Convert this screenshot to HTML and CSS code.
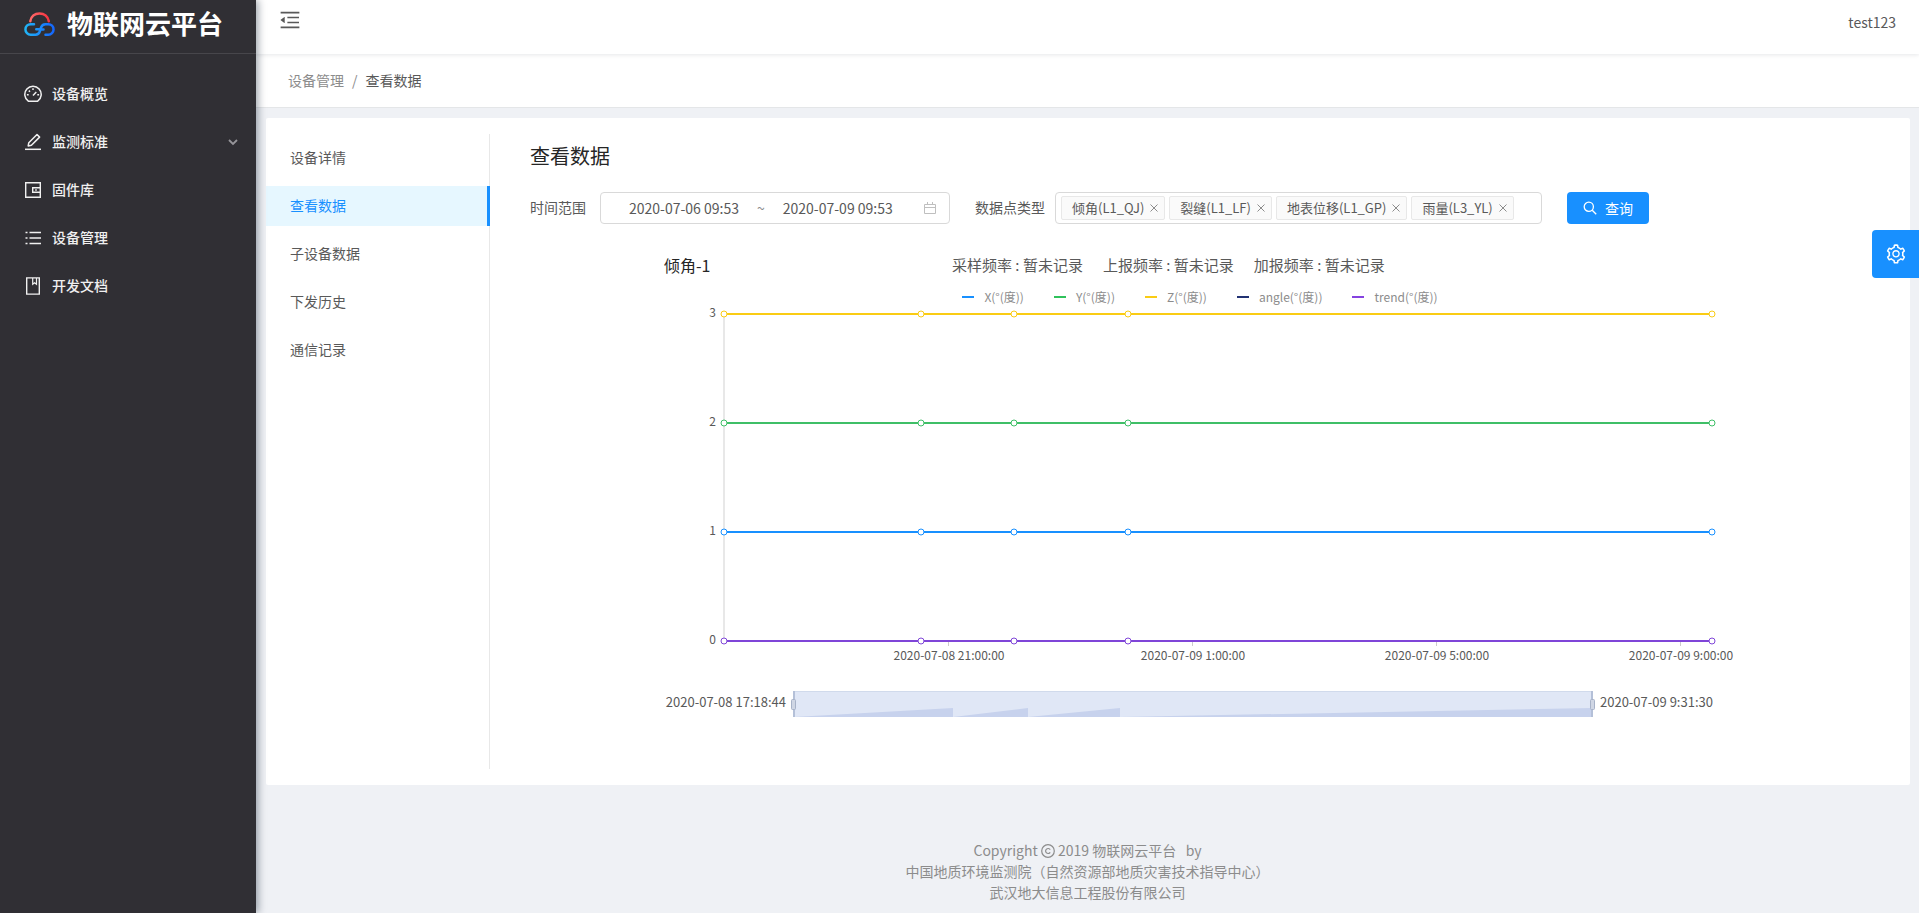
FILE: index.html
```html
<!DOCTYPE html>
<html lang="zh-CN">
<head>
<meta charset="utf-8">
<title>查看数据 - 物联网云平台</title>
<link rel="stylesheet" href="styles.css">
</head>
<body>
<div class="layout">
  <aside class="sider">
    <a class="brand" href="#">
      <svg class="brand-logo" viewBox="0 0 31 24" fill="none" stroke-width="2.500" stroke-linecap="round">
        <defs>
          <linearGradient id="cloud-red" x1="0" y1="0" x2="1" y2="0"><stop offset="0" stop-color="#ff6a6a"/><stop offset="1" stop-color="#f5333f"/></linearGradient>
          <linearGradient id="cloud-blue" gradientUnits="userSpaceOnUse" x1="0" y1="0" x2="31" y2="0"><stop offset="0" stop-color="#22b8f5"/><stop offset="1" stop-color="#1463ff"/></linearGradient>
        </defs>
        <path d="M6.300 9.300C7 4.500 10.800 1.400 15.500 1.400S24 4.500 24.800 9.300" stroke="url(#cloud-red)"/>
        <path d="M10 12.200H6.700a5.200 5.200 0 0 0 0 10.500H11.500c2.300 0 3.600-1.200 4.300-3.200l1.200-3.800c.7-2.200 2.200-3.500 4.500-3.500H24.300a5.200 5.200 0 0 1 0 10.500H21.500M12.300 17.200h3.200M18 17.400h1.500" stroke="url(#cloud-blue)"/>
      </svg>
      <span class="brand-name">物联网云平台</span>
    </a>
    <nav class="side-nav">
      <a class="side-link" href="#">
        <svg class="icon-18" viewBox="0 0 18 18" fill="none" stroke="currentColor" stroke-width="1.500"><path d="M4.300 16.200A8.200 8.200 0 1 1 13.700 16.200Z" stroke-linejoin="round"/><path d="M9 10.500l3.300-3.600M9 3.300v1.800M2.900 9.800h1.800M13.300 9.800h1.800M4.800 5.600l1.200 1.200"/></svg>
        <span>设备概览</span>
      </a>
      <a class="side-link" href="#">
        <svg class="icon-18" viewBox="0 0 18 18" fill="none" stroke="currentColor" stroke-width="1.500"><path d="M1 16.300h16"/><path d="M4.200 12.900l.6-3.200 8.200-8.200 2.600 2.600-8.200 8.200z" stroke-linejoin="round"/></svg>
        <span>监测标准</span>
        <svg class="icon-10 side-arrow" viewBox="0 0 10 10" fill="none" stroke="currentColor" stroke-width="1.800"><path d="M1 3l4 4 4-4"/></svg>
      </a>
      <a class="side-link" href="#">
        <svg class="icon-18" viewBox="0 0 18 18" fill="none" stroke="currentColor" stroke-width="1.400"><path d="M1.700 1.700h14.600v14.600H1.700zM16 6.700H8.700v4.600H16"/><path d="M11.200 8.200h1.600v1.600h-1.600z" fill="currentColor" stroke="none"/></svg>
        <span>固件库</span>
      </a>
      <a class="side-link" href="#">
        <svg class="icon-18" viewBox="0 0 18 18" fill="none" stroke="currentColor" stroke-width="1.500"><path d="M5.500 3.500H17M5.500 9H17M5.500 14.500H17M1.500 3.500h2M1.500 9h2M1.500 14.500h2"/></svg>
        <span>设备管理</span>
      </a>
      <a class="side-link" href="#">
        <svg class="icon-18" viewBox="0 0 18 18" fill="none" stroke="currentColor" stroke-width="1.400"><path d="M2.700.9h12.600v16.200H2.700z"/><path d="M8.700 1v6.300l1.900-1.500 1.900 1.500V1" stroke-width="1.200"/></svg>
        <span>开发文档</span>
      </a>
    </nav>
  </aside>

  <div class="page">
    <header class="topbar">
      <button class="fold" type="button" aria-label="收起菜单">
        <svg class="icon-24" viewBox="0 0 1024 1024" fill="currentColor"><path d="M408 442h480c4.400 0 8-3.600 8-8v-56c0-4.400-3.600-8-8-8H408c-4.400 0-8 3.600-8 8v56c0 4.400 3.600 8 8 8zm-8 204c0 4.400 3.600 8 8 8h480c4.400 0 8-3.600 8-8v-56c0-4.400-3.600-8-8-8H408c-4.400 0-8 3.600-8 8v56zm504-486H120c-4.400 0-8 3.600-8 8v56c0 4.400 3.600 8 8 8h784c4.400 0 8-3.600 8-8v-56c0-4.400-3.600-8-8-8zm0 632H120c-4.400 0-8 3.600-8 8v56c0 4.400 3.600 8 8 8h784c4.400 0 8-3.600 8-8v-56c0-4.400-3.600-8-8-8zM115.400 518.900L271.700 642c5.800 4.600 14.400.5 14.400-6.900V388.900c0-7.400-8.500-11.500-14.400-6.900L115.400 505.100a8.740 8.740 0 0 0 0 13.800z"/></svg>
      </button>
      <a class="user" href="#">test123</a>
    </header>
    <nav class="crumbs" aria-label="breadcrumb">
      <a class="crumb" href="#">设备管理</a><span class="crumb-sep">/</span><span class="crumb-now">查看数据</span>
    </nav>

    <main class="card">
      <nav class="tabs">
        <a class="tab" href="#">设备详情</a>
        <a class="tab tab-active" href="#">查看数据</a>
        <a class="tab" href="#">子设备数据</a>
        <a class="tab" href="#">下发历史</a>
        <a class="tab" href="#">通信记录</a>
      </nav>
      <section class="content">
        <h1 class="title">查看数据</h1>
        <form class="filters">
          <label class="label-range" for="range-start">时间范围</label>
          <div class="range">
            <input class="range-input" id="range-start" type="text" value="2020-07-06 09:53">
            <span class="range-sep">~</span>
            <input class="range-input" type="text" aria-label="结束时间" value="2020-07-09 09:53">
            <svg class="icon-14 range-icon" viewBox="0 0 14 14" fill="none" stroke="currentColor"><path d="M1.500 3.500h11v9h-11zM1.500 6.500h11M4.500 1v3M9.500 1v3"/></svg>
          </div>
          <span class="label-types" id="types-label">数据点类型</span>
          <div class="tags" role="group" aria-labelledby="types-label">
            <span class="tag">倾角(L1_QJ)<button class="tag-close" type="button" aria-label="移除"><svg class="icon-8" viewBox="0 0 8 8" stroke="currentColor"><path d="M.5.5l7 7M7.500.5l-7 7"/></svg></button></span>
            <span class="tag">裂缝(L1_LF)<button class="tag-close" type="button" aria-label="移除"><svg class="icon-8" viewBox="0 0 8 8" stroke="currentColor"><path d="M.5.5l7 7M7.500.5l-7 7"/></svg></button></span>
            <span class="tag">地表位移(L1_GP)<button class="tag-close" type="button" aria-label="移除"><svg class="icon-8" viewBox="0 0 8 8" stroke="currentColor"><path d="M.5.5l7 7M7.500.5l-7 7"/></svg></button></span>
            <span class="tag">雨量(L3_YL)<button class="tag-close" type="button" aria-label="移除"><svg class="icon-8" viewBox="0 0 8 8" stroke="currentColor"><path d="M.5.5l7 7M7.500.5l-7 7"/></svg></button></span>
          </div>
          <button class="query" type="submit">
            <svg class="icon-14" viewBox="0 0 14 14" fill="none" stroke="currentColor" stroke-width="1.300"><circle cx="5.800" cy="5.800" r="4.600"/><path d="M9.200 9.200l4 4"/></svg>
            <span>查询</span>
          </button>
        </form>

        <div class="chart">
          <div class="chart-head">
            <h2 class="chart-title">倾角-1</h2>
            <div class="stats"><span>采样频率 : 暂未记录</span><span>上报频率 : 暂未记录</span><span>加报频率 : 暂未记录</span></div>
          </div>
          <ul class="legend">
            <li class="legend-item"><i class="mark mark-x"></i>X(°(度))</li>
            <li class="legend-item"><i class="mark mark-y"></i>Y(°(度))</li>
            <li class="legend-item"><i class="mark mark-z"></i>Z(°(度))</li>
            <li class="legend-item"><i class="mark mark-angle"></i>angle(°(度))</li>
            <li class="legend-item"><i class="mark mark-trend"></i>trend(°(度))</li>
          </ul>
          <svg class="plot" viewBox="0 0 1072 424">
            <path class="axis" d="M60 9v327"/>
            <path class="tick" d="M284.500 337v4M528.500 337v4M772.500 337v4M1016.500 337v4"/>
            <g class="axis-text axis-y">
              <text x="52" y="12">3</text><text x="52" y="121">2</text><text x="52" y="230">1</text><text x="52" y="339">0</text>
            </g>
            <g class="axis-text axis-x">
              <text x="285" y="355">2020-07-08 21:00:00</text><text x="529" y="355">2020-07-09 1:00:00</text><text x="773" y="355">2020-07-09 5:00:00</text><text x="1017" y="355">2020-07-09 9:00:00</text>
            </g>
            <g class="series series-z"><path d="M60 9h988"/><circle cx="60" cy="9" r="3"/><circle cx="257" cy="9" r="3"/><circle cx="350" cy="9" r="3"/><circle cx="464" cy="9" r="3"/><circle cx="1048" cy="9" r="3"/></g>
            <g class="series series-y"><path d="M60 118h988"/><circle cx="60" cy="118" r="3"/><circle cx="257" cy="118" r="3"/><circle cx="350" cy="118" r="3"/><circle cx="464" cy="118" r="3"/><circle cx="1048" cy="118" r="3"/></g>
            <g class="series series-x"><path d="M60 227h988"/><circle cx="60" cy="227" r="3"/><circle cx="257" cy="227" r="3"/><circle cx="350" cy="227" r="3"/><circle cx="464" cy="227" r="3"/><circle cx="1048" cy="227" r="3"/></g>
            <g class="series series-trend"><path d="M60 336h988"/><circle cx="60" cy="336" r="3"/><circle cx="257" cy="336" r="3"/><circle cx="350" cy="336" r="3"/><circle cx="464" cy="336" r="3"/><circle cx="1048" cy="336" r="3"/></g>
            <rect class="zoom-bg" x="130" y="386" width="798" height="26"/>
            <path class="zoom-area" d="M130 412L289 403v9L364 403v9L456 403v9L928 403v9z"/>
            <path class="zoom-top" d="M130 386.500h798"/>
            <path class="zoom-edge" d="M130 386v26M928 386v26"/>
            <rect class="zoom-handle" x="127.500" y="394.500" width="4" height="10" rx="1"/>
            <rect class="zoom-handle" x="926.500" y="394.500" width="4" height="10" rx="1"/>
            <text class="zoom-text zoom-start" x="122" y="402">2020-07-08 17:18:44</text>
            <text class="zoom-text" x="936" y="402">2020-07-09 9:31:30</text>
          </svg>
        </div>
      </section>
    </main>

    <footer class="footer">
      <div>Copyright <svg class="icon-14 copy" viewBox="0 0 14 14" fill="none" stroke="currentColor" stroke-width="1.200"><circle cx="7" cy="7" r="6.300"/><path d="M9.200 5.600a2.500 2.500 0 1 0 0 2.800"/></svg> 2019 物联网云平台 &nbsp; by</div>
      <div>中国地质环境监测院（自然资源部地质灾害技术指导中心）</div>
      <div>武汉地大信息工程股份有限公司</div>
    </footer>
  </div>
</div>
<button class="setting" type="button" aria-label="设置">
  <svg class="icon-22" viewBox="0 0 1024 1024" fill="currentColor"><path d="M924.800 625.700l-65.500-56c3.100-19 4.700-38.400 4.700-57.800s-1.600-38.800-4.700-57.800l65.500-56a32.030 32.030 0 0 0 9.300-35.200l-.9-2.600a443.740 443.740 0 0 0-79.700-137.900l-1.800-2.100a32.120 32.120 0 0 0-35.100-9.500l-81.300 28.900c-30-24.600-63.500-44-99.700-57.600l-15.700-85a32.050 32.050 0 0 0-25.800-25.700l-2.700-.5c-52.100-9.400-106.900-9.400-159 0l-2.700.5a32.050 32.050 0 0 0-25.800 25.700l-15.800 85.400a351.860 351.860 0 0 0-99 57.400l-81.900-29.100a32 32 0 0 0-35.100 9.500l-1.800 2.100a446.020 446.020 0 0 0-79.700 137.900l-.9 2.600c-4.500 12.500-.8 26.500 9.300 35.200l66.300 56.600c-3.100 18.800-4.600 38-4.600 57.100 0 19.200 1.500 38.400 4.600 57.100L99 625.500a32.030 32.030 0 0 0-9.300 35.200l.9 2.600c18.100 50.400 44.900 96.900 79.700 137.900l1.800 2.100a32.120 32.120 0 0 0 35.100 9.500l81.900-29.100c29.800 24.500 63.100 43.900 99 57.400l15.800 85.400a32.050 32.050 0 0 0 25.800 25.700l2.700.5a449.400 449.400 0 0 0 159 0l2.700-.5a32.050 32.050 0 0 0 25.800-25.700l15.700-85a350 350 0 0 0 99.700-57.600l81.300 28.900a32 32 0 0 0 35.100-9.500l1.800-2.100c34.800-41.100 61.600-87.500 79.700-137.900l.9-2.600c4.500-12.300.8-26.300-9.300-35zM788.300 465.900c2.500 15.100 3.800 30.600 3.800 46.100s-1.300 31-3.800 46.100l-6.600 40.100 74.700 63.900a370.030 370.030 0 0 1-42.600 73.600L721 702.800l-31.400 25.800c-23.900 19.600-50.500 35-79.300 45.800l-38.100 14.300-17.900 97a377.500 377.500 0 0 1-85 0l-17.900-97.200-37.800-14.500c-28.500-10.800-55-26.200-78.700-45.700l-31.400-25.900-93.400 33.200c-17-22.900-31.200-47.600-42.600-73.600l75.500-64.500-6.500-40c-2.400-14.900-3.700-30.300-3.700-45.500 0-15.300 1.200-30.600 3.700-45.500l6.500-40-75.500-64.500c11.300-26.100 25.600-50.700 42.600-73.600l93.400 33.200 31.400-25.900c23.700-19.500 50.200-34.900 78.700-45.700l37.900-14.300 17.900-97.200c28.100-3.200 56.800-3.200 85 0l17.900 97 38.100 14.300c28.700 10.800 55.400 26.200 79.300 45.800l31.400 25.800 92.800-32.900c17 22.900 31.200 47.600 42.600 73.600L781.800 426l6.500 39.900zM512 326c-97.200 0-176 78.800-176 176s78.800 176 176 176 176-78.800 176-176-78.800-176-176-176zm79.200 255.200A111.600 111.600 0 0 1 512 614c-29.900 0-58-11.700-79.200-32.800A111.600 111.600 0 0 1 400 502c0-29.900 11.700-58 32.800-79.200C454 401.600 482.100 390 512 390c29.900 0 58 11.600 79.200 32.800A111.600 111.600 0 0 1 624 502c0 29.900-11.700 58-32.800 79.200z"/></svg>
</button>
</body>
</html>
```
FILE: styles.css
```css
* { box-sizing: border-box; }
body {
  margin: 0;
  background: #eff1f5;
  color: #595959;
  font: 14px/22px "Noto Sans CJK SC", "Noto Sans", sans-serif;
}
a { color: inherit; text-decoration: none; }
button, input { font: inherit; color: inherit; }
button { cursor: pointer; }
svg { display: block; flex: none; }
.icon-8 { width: 8px; height: 8px; }
.icon-10 { width: 10px; height: 10px; }
.icon-14 { width: 14px; height: 14px; }
.icon-18 { width: 18px; height: 18px; }
.icon-22 { width: 22px; height: 22px; }
.icon-24 { width: 24px; height: 24px; }

.layout { display: flex; min-height: 100vh; }
.sider {
  position: relative;
  z-index: 2;
  flex: 0 0 256px;
  background: #302f34;
  color: #f0f0f0;
  box-shadow: 2px 0 8px rgba(0, 21, 41, 0.4);
}
.brand {
  display: flex;
  align-items: center;
  gap: 12px;
  height: 54px;
  padding: 0 24px 6px;
  border-bottom: 1px solid #47464b;
  color: #fff;
}
.brand-logo { width: 31px; height: 24px; }
.brand-name { padding-bottom: 2px; font-size: 26px; line-height: 32px; font-weight: 700; }
.side-nav { display: flex; flex-direction: column; gap: 8px; padding-top: 20px; }
.side-link { display: flex; align-items: center; gap: 10px; height: 40px; padding: 0 18px 0 24px; font-weight: 500; }
.side-link span { padding-bottom: 2px; }
.side-arrow { margin-left: auto; color: #96959a; }

.page { flex: 1; min-width: 0; display: flex; flex-direction: column; }
.topbar {
  position: relative;
  z-index: 1;
  display: flex;
  align-items: center;
  justify-content: space-between;
  height: 54px;
  padding: 0 23px 18px 22px;
  background: #fff;
  box-shadow: 0 1px 4px rgba(0, 21, 41, 0.1);
}
.fold { padding: 0; border: 0; background: none; margin-top: 4px; }
.user { margin-top: 8px; }
.crumbs { display: flex; gap: 8px; padding: 15px 32px 16px; background: #fff; border-bottom: 1px solid #e4e6e8; }
.crumb, .crumb-sep { color: #8c8c8c; }

.card { display: flex; margin: 10px 9px 0 10px; padding: 16px 0; background: #fff; border-radius: 2px; }
.tabs {
  flex: 0 0 224px;
  display: flex;
  flex-direction: column;
  gap: 8px;
  padding-top: 4px;
  border-right: 1px solid #e8e8e8;
}
.tab { margin-right: -1px; padding: 0 24px 2px; line-height: 38px; }
.tab-active { background: #e6f7ff; color: #1890ff; border-right: 3px solid #1890ff; }
.content { flex: 1; min-width: 0; padding: 8px 40px 40px; }
.title { margin: 0 0 22px; color: #262626; font-size: 20px; line-height: 28px; font-weight: 400; }

.filters { display: flex; align-items: center; height: 32px; }
.label-range, .label-types { padding-bottom: 2px; white-space: nowrap; }
.label-range { margin-right: 14px; }
.range {
  display: flex;
  align-items: center;
  flex: 0 1 350px;
  height: 32px;
  padding: 0 12px 0 10px;
  border: 1px solid #d9d9d9;
  border-radius: 4px;
}
.range-input { flex: 0 1 146px; min-width: 0; width: 146px; padding: 0; border: 0; background: none; text-align: center; outline: 0; }
.range-sep { color: #8c8c8c; }
.range-icon { margin-left: auto; color: #bfbfbf; }
.label-types { margin: 0 10px 0 25px; }
.tags {
  display: flex;
  align-items: center;
  flex: 0 1 487px;
  min-width: 0;
  gap: 4px;
  height: 32px;
  padding: 0 5px;
  border: 1px solid #d9d9d9;
  border-radius: 4px;
}
.tag {
  display: flex;
  align-items: center;
  gap: 6px;
  height: 24px;
  padding: 0 6px 0 10px;
  border: 1px solid #e8e8e8;
  border-radius: 2px;
  background: #fafafa;
  font-size: 13px;
  white-space: nowrap;
}
.tag-close { padding: 0; border: 0; background: none; color: #8c8c8c; }
.query {
  display: flex;
  align-items: center;
  gap: 8px;
  height: 32px;
  margin-left: 25px;
  padding: 0 16px;
  border: 0;
  border-radius: 4px;
  background: #1890ff;
  color: #fff;
  white-space: nowrap;
}

.chart { width: 80%; margin: 30px auto 0; }
.chart-head { display: grid; grid-template-columns: 288px 1fr; align-items: center; line-height: 22px; }
.chart-title { margin: 0; color: #262626; font-size: 16px; font-weight: 400; }
.stats { display: flex; gap: 20px; font-size: 15px; }
.legend {
  display: flex;
  justify-content: center;
  gap: 30px;
  margin: 12px 0 0;
  padding: 0;
  list-style: none;
  color: #8c8c8c;
  font-size: 12px;
  line-height: 17px;
}
.legend-item { display: flex; align-items: center; gap: 10px; }
.mark { width: 12px; height: 2px; }
.mark-x { background: #1890ff; }
.mark-y { background: #2fc25b; }
.mark-z { background: #facc14; }
.mark-angle { background: #223273; }
.mark-trend { background: #8543e0; }
.plot { width: 100%; height: auto; overflow: visible; }
.axis { stroke: #e8e8e8; stroke-width: 2; }
.tick { stroke: #ccc; }
.axis-text { fill: #595959; font-size: 12px; }
.axis-y { text-anchor: end; }
.axis-x { text-anchor: middle; }
.series path { stroke-width: 2; }
.series circle { fill: #fff; stroke-width: 1; }
.series-x { stroke: #1890ff; }
.series-y { stroke: #3fbf67; }
.series-z { stroke: #facc14; }
.series-trend { stroke: #7f45d8; }
.zoom-bg { fill: #e0e7f6; }
.zoom-area { fill: #c7d2ed; }
.zoom-top { stroke: #d0daec; }
.zoom-edge { stroke: #b4c0d8; stroke-width: 2; }
.zoom-handle { fill: #cfd6e4; stroke: #a7b2c8; }
.zoom-text { fill: #595959; font-size: 13px; }
.zoom-start { text-anchor: end; }

.footer { margin-top: auto; padding: 48px 16px 10px; color: #8c8c8c; line-height: 21px; text-align: center; }
.copy { display: inline-block; vertical-align: -2px; }

.setting {
  position: fixed;
  z-index: 3;
  top: 230px;
  right: 0;
  display: flex;
  align-items: center;
  justify-content: center;
  width: 47px;
  height: 48px;
  padding: 0;
  border: 0;
  border-radius: 4px 0 0 4px;
  background: #1890ff;
  color: #fff;
}
```
